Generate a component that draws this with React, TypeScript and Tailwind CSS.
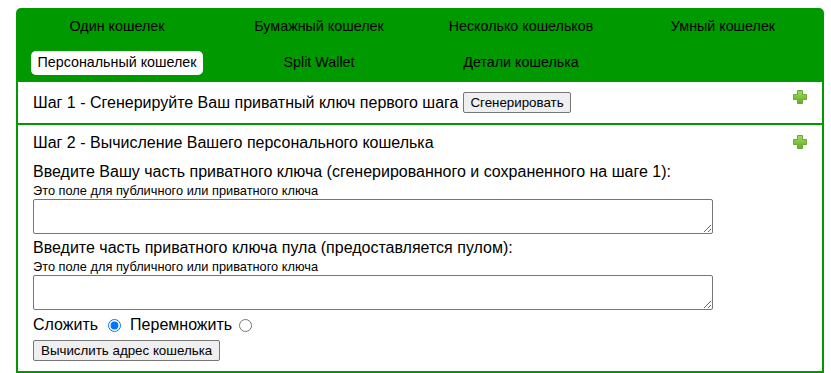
import { useState } from "react";

const tabs = [
    "Один кошелек",
    "Бумажный кошелек",
    "Несколько кошельков",
    "Умный кошелек",
    "Персональный кошелек",
    "Split Wallet",
    "Детали кошелька",
];

const PlusIcon = () => (
    <svg width="14" height="14" viewBox="0 0 14 14">
        <defs>
            <linearGradient id="plusGrad" x1="0" y1="0" x2="0" y2="1">
                <stop offset="0" stopColor="#a3da5f" />
                <stop offset="1" stopColor="#62ad25" />
            </linearGradient>
        </defs>
        <path
            d="M4.5 0.5 H9.5 V4.5 H13.5 V9.5 H9.5 V13.5 H4.5 V9.5 H0.5 V4.5 H4.5 Z"
            fill="url(#plusGrad)"
            stroke="#6aa935"
            strokeWidth="1"
            strokeLinejoin="round"
        />
    </svg>
);

const KeyField = ({ label, first }: { label: string; first?: boolean }) => (
    <div className="flex flex-col">
        <label className={`text-[16px] leading-[18px] ${first ? "mt-[11px]" : "mt-[5px]"}`}>{label}</label>
        <span className="text-[12.8px] leading-[15px] mt-[2px]">Это поле для публичного или приватного ключа</span>
        <textarea className="w-[680px] h-[35px] mt-[1px] border border-[#767676] rounded-[2px] bg-white" />
    </div>
);

export default function App() {
    const [active] = useState(4);
    const [op, setOp] = useState("add");

    return (
        <div className="bg-white min-h-[373px] pt-[8px] px-[16px] text-black" style={{ fontFamily: '"Liberation Sans", Arial, sans-serif' }}>
            <div className="w-[808px] rounded-t-[5px] overflow-hidden">
                {/* tabs */}
                <div className="bg-[#009900] grid grid-cols-4 py-[1px]">
                    {tabs.map((t, i) => (
                        <div key={t} className="h-[36px] flex items-center justify-center">
                            <span
                                className={
                                    i === active
                                        ? "bg-white rounded-[5px] px-[6px] h-[24px] flex items-center text-[14.3px]"
                                        : "text-[14.3px]"
                                }
                            >
                                {t}
                            </span>
                        </div>
                    ))}
                </div>

                <div className="border-x-2 border-b-2 border-[#009900]">
                    {/* step 1 */}
                    <div className="flex justify-between items-start pl-[15px] pr-[15px] h-[43px] border-b-2 border-[#009900]">
                        <div className="flex items-center h-[41px] text-[16px]">
                            <span>Шаг 1 - Сгенерируйте Ваш приватный ключ первого шага</span>
                            <button className="ml-[5px] h-[21px] px-[6px] text-[13.33px] border border-[#767676] rounded-[2px] bg-[#efefef]">
                                Сгенерировать
                            </button>
                        </div>
                        <div className="mt-[8px]">
                            <PlusIcon />
                        </div>
                    </div>

                    {/* step 2 */}
                    <div className="pl-[15px] pr-[15px] pt-[9px] pb-[9px]">
                        <div className="flex justify-between items-start">
                            <span className="text-[16px] leading-[18px]">Шаг 2 - Вычисление Вашего персонального кошелька</span>
                            <div className="mt-[1px]">
                                <PlusIcon />
                            </div>
                        </div>
                        <KeyField first label="Введите Вашу часть приватного ключа (сгенерированного и сохраненного на шаге 1):" />
                        <KeyField label="Введите часть приватного ключа пула (предоставляется пулом):" />
                        <div className="flex items-center text-[16px] leading-[18px] mt-[6px]">
                            <span>Сложить</span>
                            <input
                                type="radio"
                                name="op"
                                className="ml-[10px] w-[13px] h-[13px]"
                                checked={op === "add"}
                                onChange={() => setOp("add")}
                            />
                            <span className="ml-[9px]">Перемножить</span>
                            <input
                                type="radio"
                                name="op"
                                className="ml-[7px] w-[13px] h-[13px]"
                                checked={op === "mul"}
                                onChange={() => setOp("mul")}
                            />
                        </div>
                        <button className="mt-[6px] h-[21px] px-[7px] text-[13.33px] border border-[#767676] rounded-[2px] bg-[#efefef]">
                            Вычислить адрес кошелька
                        </button>
                    </div>
                </div>
            </div>
        </div>
    );
}
